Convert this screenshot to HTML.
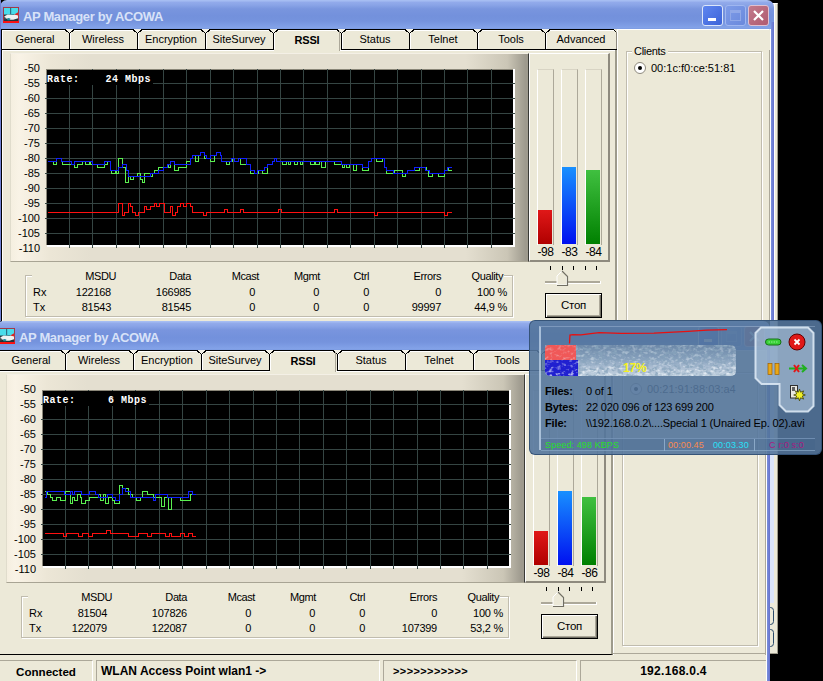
<!DOCTYPE html><html><head><meta charset="utf-8"><style>
*{margin:0;padding:0;box-sizing:border-box}
html,body{width:823px;height:681px;overflow:hidden;background:#000;position:relative;font-family:'Liberation Sans', sans-serif;font-size:11px;color:#000}
div,svg{position:absolute}
.tb{background:linear-gradient(#a6bdf2 0px,#a6bdf2 1px,#93abeb 2px,#8aa4e7 5px,#7995de 9px,#7391dc 16px,#7593dd 21px,#7d9ce4 25px,#84a3e8 28px,#7898e0 29px);border-radius:7px 7px 0 0}
.ttl{font:bold 13px 'Liberation Sans', sans-serif;color:#d8e2f8;letter-spacing:-0.35px;white-space:nowrap;line-height:18px}
.ico{width:16px;height:16px;background:#2a3a40;border:1px solid #d02020;overflow:hidden}
.ico .i1{position:absolute;left:1px;top:0;width:14px;height:7px;background:#40c8d8}
.ico .i2{position:absolute;left:1px;top:6px;width:13px;height:6px;background:#e8eef0;transform:skewY(-20deg)}
.ico .i3{position:absolute;left:10px;top:0;width:2px;height:7px;background:#1a6080}
.btn{width:21px;height:21px;border-radius:3px;border:1px solid #dce6fa}
.bmin{background:linear-gradient(135deg,#5f86f0,#3c63d8)}
.bmin i{position:absolute;left:5px;top:12px;width:8px;height:3px;background:#fff}
.bmax{background:linear-gradient(135deg,#7e9ce8,#6a89dc);border-color:#9fb6f0}
.bmax i{position:absolute;left:4px;top:4px;width:11px;height:11px;border:1px solid #90a8e8;border-top-width:3px}
.bcls{background:linear-gradient(135deg,#c27a8c,#b05a70);border-color:#e0c0d0}
.bcls svg{position:absolute;left:-1px;top:-1px}
.cl{background:#ece9d8}
.bl{background:linear-gradient(90deg,#7a90dc,#6470cc)}
.tabt{text-align:center;line-height:14px;white-space:nowrap;font-size:11px}
.tab{height:21px;border:1px solid #000;border-left-width:1px;background:linear-gradient(#fff 0,#fff 1px,#ece9d8 2px);text-align:center;line-height:18px;font-size:11px;white-space:nowrap}
.tab.sel{font-weight:bold;font-size:12px;border-color:#000;border-bottom:none;height:22px;background:linear-gradient(90deg,#fff 0,#fff 1px,#ece9d8 1px,#ece9d8 calc(100% - 2px),#aca899 calc(100% - 2px));line-height:21px}
.panel{border-left:1px solid #000;box-shadow:inset 1px 0 0 #fff;border-right:2px solid #9d9a8b;border-bottom:1px solid #000;background:#ece9d8}
.cpanel{background:linear-gradient(90deg,#f5efe0 0,#f9f3e6 8px,#ece6d6 40px,#e4dfd0 80px,#e4dfd0 88%,#cbc6b6 96%,#9e9a8e 99.5%);border-top:1px solid #f4f0e6;border-bottom:1px solid #a8a494;border-left:1px solid #e0dccc;border-right:1px solid #3a3a36}
.ylab{width:40px;text-align:right;font-size:11px;line-height:14px}
.rate{font:bold 10px 'Liberation Mono', monospace;color:#fff;white-space:pre;line-height:20px;height:15px;overflow:hidden;letter-spacing:0.5px;background:#000;padding-right:2px}
.grp{border:1px solid #c0bcae;box-shadow:inset 1px 1px 0 #fff,1px 1px 0 #fff}
.st{width:80px;text-align:right;line-height:14px;white-space:nowrap;letter-spacing:-0.25px}
.sth{letter-spacing:-0.4px}
.stl{line-height:14px}
.bpanel{border-top:1px solid #fff;border-left:1px solid #fff;border-right:2px solid #8e8a7e;border-bottom:2px solid #8e8a7e;background:#ece9d8}
.slot{border-left:1px solid #fff;border-right:1px solid #aca899;border-top:1px solid #d8d4c4}
.bar{}
.blab{width:37px;text-align:center;font-size:12px;line-height:14px;letter-spacing:-0.5px}
.pbtn{border:1px solid #000;box-shadow:inset 1px 1px 0 #fff,inset -1px -1px 0 #716f64,inset -2px -2px 0 #aca899;background:#ece9d8;text-align:center;line-height:23px;font-size:11.5px;letter-spacing:-0.3px}
.glab{background:#ece9d8;padding:0 2px;line-height:14px;letter-spacing:-0.3px}
.mac{line-height:14px;font-size:11px;white-space:nowrap}
.radio{width:12px;height:12px;border-radius:50%;background:#fff;border:1px solid #8e8a7e}
.radio i{position:absolute;left:3px;top:3px;width:4px;height:4px;border-radius:50%;background:#000}
.sp{top:660px;height:21px;border-top:1px solid #aca899;border-left:1px solid #aca899;border-right:1px solid #fff;line-height:21px;white-space:nowrap}
.pop{border-radius:6px;background:rgba(84,118,156,0.9);border:1px solid rgba(50,80,115,0.9);overflow:hidden}
.pt{font-size:11px;color:#000;line-height:14px;white-space:nowrap;letter-spacing:-0.15px}
.ps{top:118px;font-size:9px;line-height:12px;white-space:nowrap;letter-spacing:0.1px}
</style></head><body>
<div style="left:770px;top:3px;width:8px;height:651px;background:#ece9d8;border-top:1px solid #fff;border-right:1px solid #9d9a8b;border-bottom:1px solid #9d9a8b"></div>
<div style="left:774px;top:4px;width:1px;height:317px;background:#fff"></div>
<div style="left:770px;top:321px;width:4px;height:282px;background:#dbe4fa"></div>
<svg style="left:768px;top:606px" width="10" height="46"><path d="M1.5,1.5H2.5Q5.5,1.5 5.5,4.5V15.5Q5.5,18.5 2.5,18.5H1.5M1.5,23.5H2.5Q5.5,23.5 5.5,26.5V37.5Q5.5,40.5 2.5,40.5H1.5" stroke="#2a4a6a" fill="none"/></svg>
<div class="tb" style="left:0px;top:0px;width:774px;height:29px"></div><svg style="left:3px;top:7px" width="16" height="16" viewBox="0 0 17 17"><rect x="0" y="0" width="17" height="17" fill="#b03040"/><rect x="1" y="1" width="15" height="14" fill="#20343c"/><rect x="1" y="1" width="15" height="7" fill="#48dcea"/><rect x="7.5" y="1" width="1.2" height="7" fill="#2a6a80"/><path d="M1,10L5,8L11,8.5L16,7V12L11,13.5L6,13.5L3,12Z" fill="#eef2f2"/><path d="M12,8L16,5.5V9Z" fill="#e02020"/><path d="M4,12.5Q6,11 8,12.5L7,14H5Z" fill="#1a8a9a"/><path d="M1,9L3,12L2,14Z" fill="#607070"/><rect x="0" y="15" width="17" height="2" fill="#ff1010"/></svg><div class="ttl" style="left:23px;top:8px">AP Manager by ACOWA</div><div class="btn bmin" style="left:702px;top:5px"><i></i></div><div class="btn bmax" style="left:725px;top:5px"><i></i></div><div class="btn bcls" style="left:748px;top:5px"><svg width="21" height="21"><path d="M6,6L15,15M15,6L6,15" stroke="#fff" stroke-width="2.2"/></svg></div><div class="cl" style="left:1px;top:29px;width:770px;height:292px"></div><div style="left:769px;top:29px;width:1px;height:292px;background:#aca899"></div><div style="left:770px;top:29px;width:1px;height:292px;background:#fff"></div><div class="bl" style="left:0px;top:0px;width:1px;height:321px"></div><div class="bl" style="left:771px;top:22px;width:3px;height:299px"></div><div class="panel" style="left:1px;top:49px;width:616px;height:284px"></div><svg style="position:absolute;left:0;top:0" width="823" height="681" shape-rendering="crispEdges"><rect x="1" y="29" width="616" height="21" fill="#ece9d8"/><rect x="617" y="29" width="153" height="21" fill="#ece9d8"/><rect x="617" y="29" width="152" height="1" fill="#fff"/><rect x="617" y="29" width="1" height="300" fill="#fff"/><rect x="2" y="30" width="612" height="1" fill="#fff"/><rect x="1" y="29" width="613" height="1" fill="#000"/><rect x="1" y="49" width="272" height="1" fill="#000"/><rect x="341" y="49" width="276" height="1" fill="#000"/><rect x="2" y="50" width="613" height="1" fill="#fff"/><rect x="274" y="49" width="65" height="2" fill="#ece9d8"/><rect x="1" y="29" width="1" height="21" fill="#000"/><rect x="2" y="31" width="1" height="18" fill="#fff"/><path d="M65,29H74L69.5,33.5Z" fill="#f4f2e8"/><path d="M65,29.5L69.5,33.5L74,29.5" stroke="#000" stroke-width="1.1" fill="none"/><rect x="69" y="33" width="1" height="17" fill="#000"/><rect x="70" y="33" width="1" height="16" fill="#fff"/><path d="M133,29H142L137.5,33.5Z" fill="#f4f2e8"/><path d="M133,29.5L137.5,33.5L142,29.5" stroke="#000" stroke-width="1.1" fill="none"/><rect x="137" y="33" width="1" height="17" fill="#000"/><rect x="138" y="33" width="1" height="16" fill="#fff"/><path d="M201,29H210L205.5,33.5Z" fill="#f4f2e8"/><path d="M201,29.5L205.5,33.5L210,29.5" stroke="#000" stroke-width="1.1" fill="none"/><rect x="205" y="33" width="1" height="17" fill="#000"/><rect x="206" y="33" width="1" height="16" fill="#fff"/><path d="M269,29H278L273.5,33.5Z" fill="#f4f2e8"/><path d="M269,29.5L273.5,33.5L278,29.5" stroke="#000" stroke-width="1.1" fill="none"/><rect x="273" y="33" width="1" height="17" fill="#000"/><rect x="274" y="33" width="1" height="16" fill="#fff"/><path d="M337,29H346L341.5,33.5Z" fill="#f4f2e8"/><path d="M337,29.5L341.5,33.5L346,29.5" stroke="#000" stroke-width="1.1" fill="none"/><rect x="341" y="33" width="1" height="17" fill="#000"/><rect x="342" y="33" width="1" height="16" fill="#fff"/><path d="M405,29H414L409.5,33.5Z" fill="#f4f2e8"/><path d="M405,29.5L409.5,33.5L414,29.5" stroke="#000" stroke-width="1.1" fill="none"/><rect x="409" y="33" width="1" height="17" fill="#000"/><rect x="410" y="33" width="1" height="16" fill="#fff"/><path d="M473,29H482L477.5,33.5Z" fill="#f4f2e8"/><path d="M473,29.5L477.5,33.5L482,29.5" stroke="#000" stroke-width="1.1" fill="none"/><rect x="477" y="33" width="1" height="17" fill="#000"/><rect x="478" y="33" width="1" height="16" fill="#fff"/><path d="M541,29H550L545.5,33.5Z" fill="#f4f2e8"/><path d="M541,29.5L545.5,33.5L550,29.5" stroke="#000" stroke-width="1.1" fill="none"/><rect x="545" y="33" width="1" height="17" fill="#000"/><rect x="546" y="33" width="1" height="16" fill="#fff"/><path d="M613.5,29.5L616.5,32.5" stroke="#000" stroke-width="1.2"/><rect x="616" y="32" width="1" height="17" fill="#8e8a7e"/><rect x="613" y="49" width="4" height="1" fill="#000"/><rect x="339" y="31" width="1" height="20" fill="#aca899"/></svg><div class="tabt" style="left:1px;top:32px;width:68px">General</div><div class="tabt" style="left:69px;top:32px;width:68px">Wireless</div><div class="tabt" style="left:137px;top:32px;width:68px">Encryption</div><div class="tabt" style="left:205px;top:32px;width:68px">SiteSurvey</div><div class="tabt" style="left:273px;top:33px;width:68px;font-weight:bold;font-size:11px;letter-spacing:-0.2px">RSSI</div><div class="tabt" style="left:341px;top:32px;width:68px">Status</div><div class="tabt" style="left:409px;top:32px;width:68px">Telnet</div><div class="tabt" style="left:477px;top:32px;width:68px">Tools</div><div class="tabt" style="left:545px;top:32px;width:72px">Advanced</div><div class="cpanel" style="left:10px;top:53px;width:519px;height:209px"></div><div class="ylab" style="left:0px;top:61px">-50</div><div class="ylab" style="left:0px;top:76px">-55</div><div class="ylab" style="left:0px;top:91px">-60</div><div class="ylab" style="left:0px;top:106px">-65</div><div class="ylab" style="left:0px;top:121px">-70</div><div class="ylab" style="left:0px;top:136px">-75</div><div class="ylab" style="left:0px;top:151px">-80</div><div class="ylab" style="left:0px;top:166px">-85</div><div class="ylab" style="left:0px;top:181px">-90</div><div class="ylab" style="left:0px;top:196px">-95</div><div class="ylab" style="left:0px;top:211px">-100</div><div class="ylab" style="left:0px;top:226px">-105</div><div class="ylab" style="left:0px;top:241px">-110</div><svg style="position:absolute;left:0;top:0" width="823" height="681" shape-rendering="crispEdges"><rect x="47" y="69" width="466" height="176" fill="#000"/><rect x="46" y="69" width="467" height="1" fill="#8a8678"/><rect x="46" y="69" width="1" height="176" fill="#8a8678"/><rect x="47" y="245" width="468" height="2" fill="#fff"/><rect x="513" y="69" width="2" height="178" fill="#fff"/><rect x="45" y="83" width="470" height="1" fill="#354543"/><rect x="45" y="98" width="470" height="1" fill="#354543"/><rect x="45" y="113" width="470" height="1" fill="#354543"/><rect x="45" y="128" width="470" height="1" fill="#354543"/><rect x="45" y="143" width="470" height="1" fill="#354543"/><rect x="45" y="158" width="470" height="1" fill="#354543"/><rect x="45" y="173" width="470" height="1" fill="#354543"/><rect x="45" y="188" width="470" height="1" fill="#354543"/><rect x="45" y="203" width="470" height="1" fill="#354543"/><rect x="45" y="218" width="470" height="1" fill="#354543"/><rect x="45" y="233" width="470" height="1" fill="#354543"/><rect x="69" y="69" width="1" height="179" fill="#354543"/><rect x="92" y="69" width="1" height="179" fill="#354543"/><rect x="116" y="69" width="1" height="179" fill="#354543"/><rect x="139" y="69" width="1" height="179" fill="#354543"/><rect x="163" y="69" width="1" height="179" fill="#354543"/><rect x="186" y="69" width="1" height="179" fill="#354543"/><rect x="210" y="69" width="1" height="179" fill="#354543"/><rect x="233" y="69" width="1" height="179" fill="#354543"/><rect x="257" y="69" width="1" height="179" fill="#354543"/><rect x="280" y="69" width="1" height="179" fill="#354543"/><rect x="303" y="69" width="1" height="179" fill="#354543"/><rect x="327" y="69" width="1" height="179" fill="#354543"/><rect x="350" y="69" width="1" height="179" fill="#354543"/><rect x="374" y="69" width="1" height="179" fill="#354543"/><rect x="397" y="69" width="1" height="179" fill="#354543"/><rect x="421" y="69" width="1" height="179" fill="#354543"/><rect x="444" y="69" width="1" height="179" fill="#354543"/><rect x="467" y="69" width="1" height="179" fill="#354543"/><rect x="491" y="69" width="1" height="179" fill="#354543"/><g fill="none" stroke-width="1"><path d="M47.5,161.5 H53.5 V164.5 H56.5 V158.5 H61.5 V161.5 H62.5 V164.5 H74.5 V161.5 H74.5 V167.5 H77.5 V164.5 H82.5 V161.5 H85.5 V164.5 H89.5 V161.5 H90.5 V164.5 H97.5 V167.5 H104.5 V164.5 H107.5 V161.5 H110.5 V170.5 H111.5 V173.5 H115.5 V170.5 H116.5 V173.5 H118.5 V158.5 H122.5 V164.5 H122.5 V167.5 H125.5 V182.5 H128.5 V176.5 H130.5 V179.5 H133.5 V176.5 H137.5 V173.5 H140.5 V179.5 H142.5 V182.5 H144.5 V173.5 H150.5 V176.5 H152.5 V173.5 H154.5 V170.5 H158.5 V167.5 H167.5 V164.5 H168.5 V167.5 H170.5 V161.5 H174.5 V170.5 H178.5 V167.5 H186.5 V161.5 H190.5 V158.5 H192.5 V155.5 H195.5 V161.5 H198.5 V155.5 H200.5 V152.5 H204.5 V155.5 H204.5 V158.5 H210.5 V161.5 H214.5 V155.5 H216.5 V152.5 H220.5 V155.5 H221.5 V161.5 H226.5 V164.5 H229.5 V161.5 H232.5 V158.5 H234.5 V161.5 H238.5 V158.5 H240.5 V164.5 H250.5 V173.5 H254.5 V170.5 H254.5 V173.5 H258.5 V170.5 H262.5 V173.5 H267.5 V164.5 H272.5 V161.5 H274.5 V158.5 H276.5 V161.5 H282.5 V164.5 H286.5 V161.5 H288.5 V164.5 H290.5 V161.5 H294.5 V164.5 H297.5 V161.5 H300.5 V164.5 H302.5 V161.5 H310.5 V164.5 H314.5 V161.5 H315.5 V164.5 H319.5 V161.5 H321.5 V167.5 H325.5 V161.5 H334.5 V164.5 H342.5 V167.5 H344.5 V164.5 H346.5 V167.5 H349.5 V164.5 H353.5 V170.5 H356.5 V164.5 H362.5 V170.5 H368.5 V161.5 H371.5 V158.5 H376.5 V161.5 H382.5 V158.5 H384.5 V167.5 H386.5 V173.5 H394.5 V170.5 H402.5 V176.5 H405.5 V173.5 H407.5 V170.5 H414.5 V167.5 H414.5 V170.5 H419.5 V167.5 H426.5 V170.5 H428.5 V176.5 H432.5 V173.5 H438.5 V176.5 H444.5 V173.5 H444.5 V170.5 H447.5 V167.5 H448.5 V170.5 H451.5" stroke="#5af050"/><path d="M47.5,161.5 H56.5 V158.5 H61.5 V161.5 H71.5 V164.5 H74.5 V161.5 H92.5 V164.5 H104.5 V161.5 H110.5 V170.5 H118.5 V167.5 H122.5 V164.5 H126.5 V170.5 H128.5 V176.5 H150.5 V173.5 H158.5 V170.5 H163.5 V167.5 H167.5 V164.5 H170.5 V161.5 H174.5 V164.5 H190.5 V158.5 H192.5 V155.5 H200.5 V152.5 H204.5 V155.5 H206.5 V158.5 H210.5 V155.5 H216.5 V152.5 H220.5 V155.5 H221.5 V161.5 H231.5 V158.5 H234.5 V161.5 H238.5 V158.5 H246.5 V164.5 H250.5 V170.5 H254.5 V173.5 H257.5 V170.5 H264.5 V167.5 H267.5 V164.5 H272.5 V161.5 H274.5 V158.5 H276.5 V161.5 H341.5 V164.5 H362.5 V167.5 H368.5 V161.5 H371.5 V158.5 H384.5 V167.5 H386.5 V170.5 H393.5 V173.5 H407.5 V170.5 H414.5 V167.5 H425.5 V170.5 H429.5 V173.5 H444.5 V170.5 H447.5 V167.5 H451.5" stroke="#1020ff"/><path d="M47.5,212.5 H118.5 V203.5 H122.5 V215.5 H124.5 V212.5 H128.5 V203.5 H130.5 V206.5 H132.5 V212.5 H135.5 V215.5 H138.5 V212.5 H144.5 V206.5 H146.5 V209.5 H150.5 V206.5 H154.5 V203.5 H156.5 V206.5 H159.5 V203.5 H164.5 V212.5 H170.5 V206.5 H172.5 V215.5 H175.5 V212.5 H177.5 V206.5 H180.5 V203.5 H183.5 V206.5 H186.5 V203.5 H190.5 V206.5 H192.5 V212.5 H203.5 V215.5 H206.5 V212.5 H224.5 V209.5 H227.5 V212.5 H240.5 V209.5 H243.5 V212.5 H278.5 V209.5 H281.5 V212.5 H334.5 V209.5 H337.5 V212.5 H374.5 V215.5 H377.5 V212.5 H444.5 V215.5 H447.5 V212.5 H451.5" stroke="#ff1010"/></g></svg><div class="rate" style="left:47px;top:70px">Rate:    24 Mbps</div><div class="grp" style="left:25px;top:275px;width:488px;height:42px"></div><div style="left:32px;top:270px;width:472px;height:12px;background:#ece9d8"></div><div class="st sth" style="left:36px;top:269px">MSDU</div><div class="st sth" style="left:111px;top:269px">Data</div><div class="st sth" style="left:179px;top:269px">Mcast</div><div class="st sth" style="left:240px;top:269px">Mgmt</div><div class="st sth" style="left:289px;top:269px">Ctrl</div><div class="st sth" style="left:361px;top:269px">Errors</div><div class="st sth" style="left:423px;top:269px">Quality</div><div class="stl" style="left:33px;top:285px">Rx</div><div class="stl" style="left:33px;top:300px">Tx</div><div class="st" style="left:31px;top:285px">122168</div><div class="st" style="left:111px;top:285px">166985</div><div class="st" style="left:175px;top:285px">0</div><div class="st" style="left:239px;top:285px">0</div><div class="st" style="left:289px;top:285px">0</div><div class="st" style="left:361px;top:285px">0</div><div class="st" style="left:427px;top:285px">100 %</div><div class="st" style="left:31px;top:300px">81543</div><div class="st" style="left:111px;top:300px">81545</div><div class="st" style="left:175px;top:300px">0</div><div class="st" style="left:239px;top:300px">0</div><div class="st" style="left:289px;top:300px">0</div><div class="st" style="left:361px;top:300px">99997</div><div class="st" style="left:427px;top:300px">44,9 %</div><div class="bpanel" style="left:529px;top:53px;width:81px;height:209px"></div><div class="slot" style="left:537px;top:69px;width:17px;height:176px"></div><div class="bar" style="left:538px;top:210px;width:14px;height:34px;background:linear-gradient(#e01818,#b00000)"></div><div class="blab" style="left:527px;top:245px">-98</div><div class="slot" style="left:561px;top:69px;width:17px;height:176px"></div><div class="bar" style="left:562px;top:167px;width:14px;height:77px;background:linear-gradient(#1890ff,#0010f0)"></div><div class="blab" style="left:551px;top:245px">-83</div><div class="slot" style="left:585px;top:69px;width:17px;height:176px"></div><div class="bar" style="left:586px;top:170px;width:14px;height:74px;background:linear-gradient(#40c040,#008000)"></div><div class="blab" style="left:575px;top:245px">-84</div><svg style="position:absolute;left:0;top:0" width="823" height="681"><path d="M550.0,266V270 M561.5,266V270 M573.0,266V270 M585.0,266V270 M596.0,266V270" stroke="#000" shape-rendering="crispEdges" transform="translate(0.5,0)"/><rect x="545" y="281" width="56" height="3" fill="#fff" stroke="none"/><rect x="545" y="281" width="55" height="2" fill="#aca899"/><path d="M557,285V276L562,271L567,276V285Z" fill="#ece9d8" stroke="#fff"/><path d="M562,271L567.5,276.5V285.5H557" stroke="#716f64" stroke-width="1.2" fill="none"/></svg><div class="pbtn" style="left:545px;top:293px;width:57px;height:25px">Стоп</div><div class="grp" style="left:626px;top:51px;width:136px;height:274px"></div><div class="glab" style="left:632px;top:44px">Clients</div><div class="radio" style="left:634px;top:62px"><i></i></div><div class="mac" style="left:651px;top:61px">00:1c:f0:ce:51:81</div>
<div class="tb" style="left:-4px;top:321px;width:774px;height:29px"></div><svg style="left:-1px;top:328px" width="16" height="16" viewBox="0 0 17 17"><rect x="0" y="0" width="17" height="17" fill="#b03040"/><rect x="1" y="1" width="15" height="14" fill="#20343c"/><rect x="1" y="1" width="15" height="7" fill="#48dcea"/><rect x="7.5" y="1" width="1.2" height="7" fill="#2a6a80"/><path d="M1,10L5,8L11,8.5L16,7V12L11,13.5L6,13.5L3,12Z" fill="#eef2f2"/><path d="M12,8L16,5.5V9Z" fill="#e02020"/><path d="M4,12.5Q6,11 8,12.5L7,14H5Z" fill="#1a8a9a"/><path d="M1,9L3,12L2,14Z" fill="#607070"/><rect x="0" y="15" width="17" height="2" fill="#ff1010"/></svg><div class="ttl" style="left:19px;top:329px">AP Manager by ACOWA</div><div class="btn bmin" style="left:698px;top:326px"><i></i></div><div class="btn bmax" style="left:721px;top:326px"><i></i></div><div class="btn bcls" style="left:744px;top:326px"><svg width="21" height="21"><path d="M6,6L15,15M15,6L6,15" stroke="#fff" stroke-width="2.2"/></svg></div><div class="cl" style="left:-3px;top:350px;width:770px;height:331px"></div><div style="left:765px;top:350px;width:1px;height:595px;background:#aca899"></div><div style="left:766px;top:350px;width:1px;height:595px;background:#fff"></div><div class="bl" style="left:-4px;top:321px;width:1px;height:360px"></div><div class="bl" style="left:767px;top:343px;width:3px;height:338px"></div><div class="panel" style="left:-3px;top:370px;width:616px;height:285px"></div><svg style="position:absolute;left:0;top:0" width="823" height="681" shape-rendering="crispEdges"><rect x="-3" y="350" width="616" height="21" fill="#ece9d8"/><rect x="613" y="350" width="153" height="21" fill="#ece9d8"/><rect x="613" y="350" width="152" height="1" fill="#fff"/><rect x="613" y="350" width="1" height="626" fill="#fff"/><rect x="-2" y="351" width="612" height="1" fill="#fff"/><rect x="-3" y="350" width="613" height="1" fill="#000"/><rect x="-3" y="370" width="272" height="1" fill="#000"/><rect x="337" y="370" width="276" height="1" fill="#000"/><rect x="-2" y="371" width="613" height="1" fill="#fff"/><rect x="270" y="370" width="65" height="2" fill="#ece9d8"/><rect x="-3" y="350" width="1" height="21" fill="#000"/><rect x="-2" y="352" width="1" height="18" fill="#fff"/><path d="M61,350H70L65.5,354.5Z" fill="#f4f2e8"/><path d="M61,350.5L65.5,354.5L70,350.5" stroke="#000" stroke-width="1.1" fill="none"/><rect x="65" y="354" width="1" height="17" fill="#000"/><rect x="66" y="354" width="1" height="16" fill="#fff"/><path d="M129,350H138L133.5,354.5Z" fill="#f4f2e8"/><path d="M129,350.5L133.5,354.5L138,350.5" stroke="#000" stroke-width="1.1" fill="none"/><rect x="133" y="354" width="1" height="17" fill="#000"/><rect x="134" y="354" width="1" height="16" fill="#fff"/><path d="M197,350H206L201.5,354.5Z" fill="#f4f2e8"/><path d="M197,350.5L201.5,354.5L206,350.5" stroke="#000" stroke-width="1.1" fill="none"/><rect x="201" y="354" width="1" height="17" fill="#000"/><rect x="202" y="354" width="1" height="16" fill="#fff"/><path d="M265,350H274L269.5,354.5Z" fill="#f4f2e8"/><path d="M265,350.5L269.5,354.5L274,350.5" stroke="#000" stroke-width="1.1" fill="none"/><rect x="269" y="354" width="1" height="17" fill="#000"/><rect x="270" y="354" width="1" height="16" fill="#fff"/><path d="M333,350H342L337.5,354.5Z" fill="#f4f2e8"/><path d="M333,350.5L337.5,354.5L342,350.5" stroke="#000" stroke-width="1.1" fill="none"/><rect x="337" y="354" width="1" height="17" fill="#000"/><rect x="338" y="354" width="1" height="16" fill="#fff"/><path d="M401,350H410L405.5,354.5Z" fill="#f4f2e8"/><path d="M401,350.5L405.5,354.5L410,350.5" stroke="#000" stroke-width="1.1" fill="none"/><rect x="405" y="354" width="1" height="17" fill="#000"/><rect x="406" y="354" width="1" height="16" fill="#fff"/><path d="M469,350H478L473.5,354.5Z" fill="#f4f2e8"/><path d="M469,350.5L473.5,354.5L478,350.5" stroke="#000" stroke-width="1.1" fill="none"/><rect x="473" y="354" width="1" height="17" fill="#000"/><rect x="474" y="354" width="1" height="16" fill="#fff"/><path d="M537,350H546L541.5,354.5Z" fill="#f4f2e8"/><path d="M537,350.5L541.5,354.5L546,350.5" stroke="#000" stroke-width="1.1" fill="none"/><rect x="541" y="354" width="1" height="17" fill="#000"/><rect x="542" y="354" width="1" height="16" fill="#fff"/><path d="M609.5,350.5L612.5,353.5" stroke="#000" stroke-width="1.2"/><rect x="612" y="353" width="1" height="17" fill="#8e8a7e"/><rect x="609" y="370" width="4" height="1" fill="#000"/><rect x="335" y="352" width="1" height="20" fill="#aca899"/></svg><div class="tabt" style="left:-3px;top:353px;width:68px">General</div><div class="tabt" style="left:65px;top:353px;width:68px">Wireless</div><div class="tabt" style="left:133px;top:353px;width:68px">Encryption</div><div class="tabt" style="left:201px;top:353px;width:68px">SiteSurvey</div><div class="tabt" style="left:269px;top:354px;width:68px;font-weight:bold;font-size:11px;letter-spacing:-0.2px">RSSI</div><div class="tabt" style="left:337px;top:353px;width:68px">Status</div><div class="tabt" style="left:405px;top:353px;width:68px">Telnet</div><div class="tabt" style="left:473px;top:353px;width:68px">Tools</div><div class="tabt" style="left:541px;top:353px;width:72px">Advanced</div><div class="cpanel" style="left:6px;top:374px;width:519px;height:209px"></div><div class="ylab" style="left:-4px;top:382px">-50</div><div class="ylab" style="left:-4px;top:397px">-55</div><div class="ylab" style="left:-4px;top:412px">-60</div><div class="ylab" style="left:-4px;top:427px">-65</div><div class="ylab" style="left:-4px;top:442px">-70</div><div class="ylab" style="left:-4px;top:457px">-75</div><div class="ylab" style="left:-4px;top:472px">-80</div><div class="ylab" style="left:-4px;top:487px">-85</div><div class="ylab" style="left:-4px;top:502px">-90</div><div class="ylab" style="left:-4px;top:517px">-95</div><div class="ylab" style="left:-4px;top:532px">-100</div><div class="ylab" style="left:-4px;top:547px">-105</div><div class="ylab" style="left:-4px;top:562px">-110</div><svg style="position:absolute;left:0;top:0" width="823" height="681" shape-rendering="crispEdges"><rect x="43" y="390" width="466" height="176" fill="#000"/><rect x="42" y="390" width="467" height="1" fill="#8a8678"/><rect x="42" y="390" width="1" height="176" fill="#8a8678"/><rect x="43" y="566" width="468" height="2" fill="#fff"/><rect x="509" y="390" width="2" height="178" fill="#fff"/><rect x="41" y="404" width="470" height="1" fill="#354543"/><rect x="41" y="419" width="470" height="1" fill="#354543"/><rect x="41" y="434" width="470" height="1" fill="#354543"/><rect x="41" y="449" width="470" height="1" fill="#354543"/><rect x="41" y="464" width="470" height="1" fill="#354543"/><rect x="41" y="479" width="470" height="1" fill="#354543"/><rect x="41" y="494" width="470" height="1" fill="#354543"/><rect x="41" y="509" width="470" height="1" fill="#354543"/><rect x="41" y="524" width="470" height="1" fill="#354543"/><rect x="41" y="539" width="470" height="1" fill="#354543"/><rect x="41" y="554" width="470" height="1" fill="#354543"/><rect x="65" y="390" width="1" height="179" fill="#354543"/><rect x="88" y="390" width="1" height="179" fill="#354543"/><rect x="112" y="390" width="1" height="179" fill="#354543"/><rect x="135" y="390" width="1" height="179" fill="#354543"/><rect x="159" y="390" width="1" height="179" fill="#354543"/><rect x="182" y="390" width="1" height="179" fill="#354543"/><rect x="206" y="390" width="1" height="179" fill="#354543"/><rect x="229" y="390" width="1" height="179" fill="#354543"/><rect x="253" y="390" width="1" height="179" fill="#354543"/><rect x="276" y="390" width="1" height="179" fill="#354543"/><rect x="299" y="390" width="1" height="179" fill="#354543"/><rect x="323" y="390" width="1" height="179" fill="#354543"/><rect x="346" y="390" width="1" height="179" fill="#354543"/><rect x="370" y="390" width="1" height="179" fill="#354543"/><rect x="393" y="390" width="1" height="179" fill="#354543"/><rect x="417" y="390" width="1" height="179" fill="#354543"/><rect x="440" y="390" width="1" height="179" fill="#354543"/><rect x="463" y="390" width="1" height="179" fill="#354543"/><rect x="487" y="390" width="1" height="179" fill="#354543"/><g fill="none" stroke-width="1"><path d="M44.5,491.5 H47.5 V494.5 H50.5 V497.5 H52.5 V500.5 H56.5 V497.5 H60.5 V500.5 H65.5 V491.5 H70.5 V503.5 H72.5 V497.5 H74.5 V500.5 H77.5 V494.5 H80.5 V497.5 H81.5 V503.5 H85.5 V500.5 H89.5 V497.5 H98.5 V494.5 H100.5 V500.5 H103.5 V494.5 H105.5 V503.5 H108.5 V497.5 H112.5 V500.5 H114.5 V503.5 H119.5 V485.5 H122.5 V488.5 H128.5 V494.5 H132.5 V497.5 H136.5 V500.5 H140.5 V497.5 H142.5 V491.5 H147.5 V494.5 H153.5 V497.5 H161.5 V506.5 H164.5 V497.5 H168.5 V509.5 H171.5 V497.5 H180.5 V500.5 H183.5 V500.5 H190.5 V494.5 H195.5" stroke="#5af050"/><path d="M44.5,497.5 H46.5 V491.5 H64.5 V494.5 H70.5 V491.5 H72.5 V494.5 H74.5 V491.5 H81.5 V494.5 H89.5 V491.5 H95.5 V494.5 H98.5 V497.5 H107.5 V494.5 H112.5 V497.5 H115.5 V500.5 H119.5 V494.5 H122.5 V488.5 H125.5 V491.5 H130.5 V497.5 H153.5 V500.5 H155.5 V494.5 H167.5 V497.5 H188.5 V491.5 H192.5 V494.5 H195.5" stroke="#1020ff"/><path d="M44.5,533.5 H63.5 V536.5 H66.5 V533.5 H78.5 V536.5 H82.5 V533.5 H88.5 V536.5 H92.5 V533.5 H106.5 V530.5 H110.5 V533.5 H128.5 V536.5 H138.5 V533.5 H147.5 V536.5 H151.5 V533.5 H165.5 V536.5 H169.5 V533.5 H171.5 V536.5 H180.5 V533.5 H184.5 V536.5 H188.5 V533.5 H192.5 V536.5 H195.5" stroke="#ff1010"/></g></svg><div class="rate" style="left:43px;top:391px">Rate:     6 Mbps</div><div class="grp" style="left:21px;top:596px;width:488px;height:42px"></div><div style="left:28px;top:591px;width:472px;height:12px;background:#ece9d8"></div><div class="st sth" style="left:32px;top:590px">MSDU</div><div class="st sth" style="left:107px;top:590px">Data</div><div class="st sth" style="left:175px;top:590px">Mcast</div><div class="st sth" style="left:236px;top:590px">Mgmt</div><div class="st sth" style="left:285px;top:590px">Ctrl</div><div class="st sth" style="left:357px;top:590px">Errors</div><div class="st sth" style="left:419px;top:590px">Quality</div><div class="stl" style="left:29px;top:606px">Rx</div><div class="stl" style="left:29px;top:621px">Tx</div><div class="st" style="left:27px;top:606px">81504</div><div class="st" style="left:107px;top:606px">107826</div><div class="st" style="left:171px;top:606px">0</div><div class="st" style="left:235px;top:606px">0</div><div class="st" style="left:285px;top:606px">0</div><div class="st" style="left:357px;top:606px">0</div><div class="st" style="left:423px;top:606px">100 %</div><div class="st" style="left:27px;top:621px">122079</div><div class="st" style="left:107px;top:621px">122087</div><div class="st" style="left:171px;top:621px">0</div><div class="st" style="left:235px;top:621px">0</div><div class="st" style="left:285px;top:621px">0</div><div class="st" style="left:357px;top:621px">107399</div><div class="st" style="left:423px;top:621px">53,2 %</div><div class="bpanel" style="left:525px;top:374px;width:81px;height:209px"></div><div class="slot" style="left:533px;top:390px;width:17px;height:176px"></div><div class="bar" style="left:534px;top:531px;width:14px;height:34px;background:linear-gradient(#e01818,#b00000)"></div><div class="blab" style="left:523px;top:566px">-98</div><div class="slot" style="left:557px;top:390px;width:17px;height:176px"></div><div class="bar" style="left:558px;top:491px;width:14px;height:74px;background:linear-gradient(#1890ff,#0010f0)"></div><div class="blab" style="left:547px;top:566px">-84</div><div class="slot" style="left:581px;top:390px;width:17px;height:176px"></div><div class="bar" style="left:582px;top:497px;width:14px;height:68px;background:linear-gradient(#40c040,#008000)"></div><div class="blab" style="left:571px;top:566px">-86</div><svg style="position:absolute;left:0;top:0" width="823" height="681"><path d="M546.0,587V591 M557.5,587V591 M569.0,587V591 M581.0,587V591 M592.0,587V591" stroke="#000" shape-rendering="crispEdges" transform="translate(0.5,0)"/><rect x="541" y="602" width="56" height="3" fill="#fff" stroke="none"/><rect x="541" y="602" width="55" height="2" fill="#aca899"/><path d="M553,606V597L558,592L563,597V606Z" fill="#ece9d8" stroke="#fff"/><path d="M558,592L563.5,597.5V606.5H553" stroke="#716f64" stroke-width="1.2" fill="none"/></svg><div class="pbtn" style="left:541px;top:614px;width:57px;height:25px">Стоп</div><div class="grp" style="left:622px;top:372px;width:136px;height:274px"></div><div class="glab" style="left:628px;top:365px">Clients</div><div class="radio" style="left:630px;top:383px"><i></i></div><div class="mac" style="left:647px;top:382px">00:21:91:88:03:a4</div>

<div style="left:0;top:655px;width:766px;height:26px;background:#ece9d8"></div>
<div style="left:613px;top:653px;width:153px;height:1px;background:#aca899"></div>
<div class="sp" style="left:0px;width:93px;border-left:none;text-align:center;font-weight:bold;font-size:11.6px">Connected</div>
<div class="sp" style="left:96px;width:284px;padding-left:4px;font-weight:bold;font-size:12px">WLAN Access Point wlan1 -&gt;</div>
<div class="sp" style="left:383px;width:194px;padding-left:9px;font-size:11px;font-weight:bold;letter-spacing:0.4px">&gt;&gt;&gt;&gt;&gt;&gt;&gt;&gt;&gt;&gt;&gt;</div>
<div class="sp" style="left:580px;width:186px;text-align:center;font-weight:bold;font-size:12px;letter-spacing:0.3px;border-right:none">192.168.0.4</div>


<div class="pop" style="left:529px;top:320px;width:293px;height:135px">
  <div style="left:9px;top:5px;width:276px;height:124px;border-left:2px solid rgba(200,220,240,0.7);border-top:1px solid rgba(190,210,235,0.35)"></div>
  <svg style="left:0;top:0" width="293" height="134"><path d="M39.5,22.5L40,14L43,13.6L51,13.8L60.7,12.6L69.2,11.6L91,12.4L124,12.2L158,10.4L177,9.2L197,8.6" stroke="#e81010" stroke-width="1.3" fill="none"/></svg>
  <svg style="left:15px;top:24px" width="192" height="31">
    <defs>
      <linearGradient id="pg" x1="0" y1="0" x2="0" y2="1"><stop offset="0" stop-color="#6c88a8"/><stop offset="0.45" stop-color="#86a0bc"/><stop offset="0.75" stop-color="#aec0d4"/><stop offset="1" stop-color="#c0d0de"/></linearGradient>
      <filter id="nd" x="0" y="0" width="100%" height="100%"><feTurbulence type="fractalNoise" baseFrequency="0.22 0.3" numOctaves="2" seed="5"/>
        <feColorMatrix type="matrix" values="0 0 0 0 0.25  0 0 0 0 0.37  0 0 0 0 0.5  -4.5 0 0 0 2.5"/></filter>
      <filter id="nw" x="0" y="0" width="100%" height="100%"><feTurbulence type="fractalNoise" baseFrequency="0.24 0.32" numOctaves="2" seed="11"/>
        <feColorMatrix type="matrix" values="0 0 0 0 0.9  0 0 0 0 0.94  0 0 0 0 0.98  3.5 0 0 0 -1.75"/></filter>
      <linearGradient id="mg" x1="0" y1="0" x2="0" y2="1"><stop offset="0" stop-color="#fff" stop-opacity="0.35"/><stop offset="0.5" stop-color="#fff" stop-opacity="0.55"/><stop offset="1" stop-color="#fff" stop-opacity="1"/></linearGradient><mask id="mk"><rect width="192" height="31" fill="url(#mg)"/></mask>
      <clipPath id="pc"><path d="M0,0H186A5,5 0 0 1 191,5V26A5,5 0 0 1 186,31H5A5,5 0 0 1 0,26Z"/></clipPath>
    </defs>
    <g clip-path="url(#pc)">
      <rect width="192" height="31" fill="url(#pg)"/>
      <rect width="192" height="31" filter="url(#nd)" opacity="0.75"/>
      <path d="M4,0H31V15H0V4Q0,0 4,0Z" fill="#f05858"/>
      <path d="M0,15H33V31H4Q0,31 0,27Z" fill="#2020d0"/>
      <rect width="192" height="31" filter="url(#nw)" opacity="0.75" mask="url(#mk)"/>
    </g>
  </svg>
  <div style="left:93px;top:40px;font:bold 12.5px 'Liberation Sans', sans-serif;color:#f4f020;letter-spacing:-0.6px;line-height:14px">17%</div>
  <div class="pt" style="left:15px;top:63px;font-weight:bold">Files:</div><div class="pt" style="left:56px;top:63px">0 of 1</div>
  <div class="pt" style="left:15px;top:79px;font-weight:bold">Bytes:</div><div class="pt" style="left:56px;top:79px">22 020 096 of 123 699 200</div>
  <div class="pt" style="left:15px;top:95px;font-weight:bold">File:</div><div class="pt" style="left:56px;top:95px">\\192.168.0.2\....Special 1 (Unaired Ep. 02).avi</div>
  <div style="left:11px;top:117px;width:274px;height:13px;border-top:1px solid rgba(120,150,185,0.8);border-bottom:1px solid rgba(150,180,210,0.6);background:rgba(60,95,135,0.25)"></div>
  <div style="left:134px;top:118px;width:1px;height:12px;background:rgba(150,180,210,0.8)"></div>
  <div style="left:224px;top:118px;width:1px;height:12px;background:rgba(150,180,210,0.8)"></div>
  <div class="ps" style="left:15px;color:#28e028">Speed: 498 KBPS</div>
  <div class="ps" style="left:138px;color:#f88a50">00:00.45</div>
  <div class="ps" style="left:183px;color:#28e0f8">00:03.30</div>
  <div class="ps" style="left:239px;color:#a81880">C r:0 s:0</div>
  <svg style="left:224px;top:5px" width="64" height="92">
    <path d="M7,1.5H54L59.5,7V80L54,85.5H32L25.5,79V58H7.5L1.5,52V7Z" fill="rgba(178,200,222,0.62)" stroke="rgba(220,232,244,0.9)" stroke-width="2"/>
    <rect x="11.5" y="13" width="15.5" height="6" rx="3" fill="#38d038" stroke="#187018" stroke-width="1"/><path d="M14.5,16H24" stroke="#90f090" stroke-width="1" stroke-dasharray="1.5,1"/>
    <circle cx="43" cy="16" r="8" fill="#e01818" stroke="#600000" stroke-width="1"/>
    <path d="M40.5,13.5L45.5,18.5M45.5,13.5L40.5,18.5" stroke="#fff" stroke-width="1.8"/>
    <rect x="14" y="37.5" width="4" height="11" fill="#e8a818" stroke="#a06000" stroke-width="0.7"/>
    <rect x="21" y="37.5" width="4" height="11" fill="#e8a818" stroke="#a06000" stroke-width="0.7"/>
    <path d="M35,42.5H52M48,39L52,42.5L48,46" stroke="#20b020" stroke-width="2" fill="none"/>
    <path d="M40,39L45,46M45,39L40,46" stroke="#e01818" stroke-width="2"/>
    <rect x="36.5" y="59.5" width="7" height="12.5" fill="#e8e8e0" stroke="#303030" stroke-width="1"/><rect x="38" y="61" width="3" height="4" fill="#606060"/><polygon points="45.5,63.2 46.6,66.2 49.6,64.9 48.3,67.9 51.3,69.0 48.3,70.1 49.6,73.1 46.6,71.8 45.5,74.8 44.4,71.8 41.4,73.1 42.7,70.1 39.7,69.0 42.7,67.9 41.4,64.9 44.4,66.2" fill="#f0f028" stroke="#404000" stroke-width="0.8"/></svg>
</div>

</body></html>
